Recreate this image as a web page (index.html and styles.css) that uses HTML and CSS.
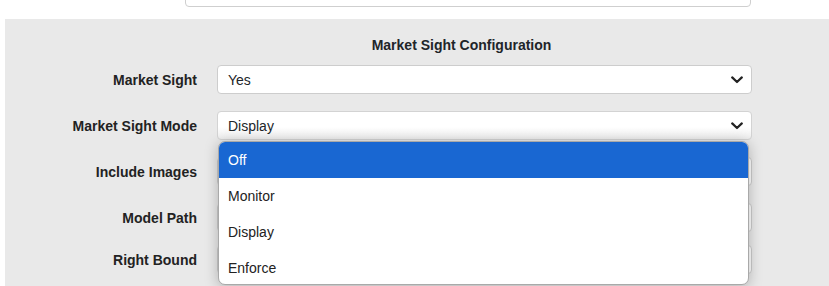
FILE: index.html
```html
<!DOCTYPE html>
<html>
<head>
<meta charset="utf-8">
<link rel="stylesheet" href="styles.css">
</head>
<body>
<div class="top-input"></div>
<div class="panel">
  <div class="title">Market Sight Configuration</div>
  <div class="row">
    <label class="label">Market Sight</label>
    <div class="select">
      <span>Yes</span>
      <svg class="chev" width="12" height="8" viewBox="0 0 12 8"><path d="M1.2 1.4 L6 6 L10.8 1.4" fill="none" stroke="#222" stroke-width="2.2" stroke-linecap="round" stroke-linejoin="round"/></svg>
    </div>
  </div>
  <div class="row">
    <label class="label">Market Sight Mode</label>
    <div class="select focused">
      <span>Display</span>
      <svg class="chev" width="12" height="8" viewBox="0 0 12 8"><path d="M1.2 1.4 L6 6 L10.8 1.4" fill="none" stroke="#222" stroke-width="2.2" stroke-linecap="round" stroke-linejoin="round"/></svg>
    </div>
  </div>
  <div class="row">
    <label class="label">Include Images</label>
    <div class="select"></div>
  </div>
  <div class="row">
    <label class="label">Model Path</label>
    <div class="select input"></div>
  </div>
  <div class="row last">
    <label class="label">Right Bound</label>
    <div class="select input"></div>
  </div>

  <div class="dropdown">
    <div class="opt selected">Off</div>
    <div class="opt">Monitor</div>
    <div class="opt">Display</div>
    <div class="opt">Enforce</div>
  </div>
</div>
</body>
</html>
```

FILE: styles.css
```css
html, body {
  margin: 0;
  padding: 0;
  background: #fff;
  overflow: hidden;
  height: 286px;
}
body {
  font-family: "Liberation Sans", Arial, sans-serif;
  color: #212529;
}
.top-input {
  margin-left: 185px;
  margin-top: -24px;
  width: 564px;
  height: 29px;
  border: 1px solid #cfcfcf;
  border-radius: 4px;
  background: #fff;
}
.panel {
  position: relative;
  margin-top: 12px;
  margin-left: 5px;
  background: #e9e9e9;
  height: 267px;
  overflow: hidden;
  padding-top: 18px;
  box-sizing: border-box;
}
.title {
  font-weight: bold;
  font-size: 14px;
  line-height: 16px;
  text-align: center;
  padding-left: 89px;
  margin-bottom: 12px;
}
.row {
  display: flex;
  align-items: center;
  gap: 20px;
  margin-bottom: 17px;
}
.row.last {
  margin-top: -4px;
}
.label {
  width: 192px;
  text-align: right;
  font-weight: bold;
  font-size: 14px;
  color: #222;
}
.select {
  box-sizing: border-box;
  width: 535px;
  height: 29px;
  border: 1px solid #cdcdcd;
  border-radius: 4px;
  background: #fff;
  display: flex;
  align-items: center;
  justify-content: space-between;
  padding: 0 8px 0 10px;
  font-size: 14px;
}
.select.focused {
  background: linear-gradient(#fff 55%, #eeeeee);
  border-color: #d3d3d3;
}
.chev {
  display: block;
  margin-top: 1px;
}
.dropdown {
  position: absolute;
  left: 213px;
  top: 122px;
  width: 531px;
  height: 144px;
  box-sizing: border-box;
  border: 1px solid #a9a9a9;
  border-radius: 7px;
  background: #fff;
  overflow: hidden;
  box-shadow: 0 2px 14px rgba(0,0,0,0.25);
}
.opt {
  height: 36px;
  line-height: 36px;
  padding-left: 9px;
  font-size: 14px;
  color: #222;
}
.opt.selected {
  background: #1967d2;
  color: #fff;
}
```
